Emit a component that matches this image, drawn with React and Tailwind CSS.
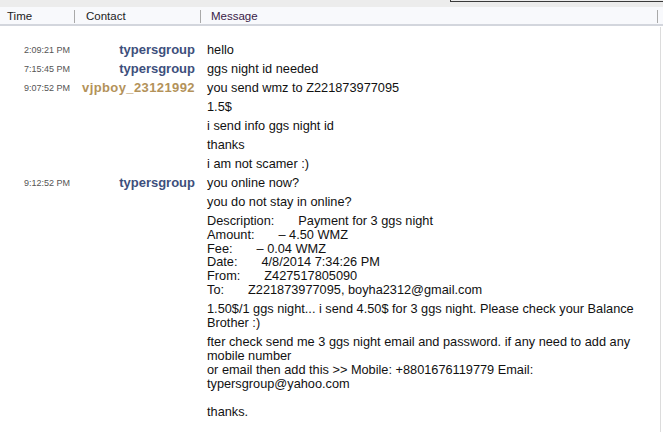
import React from 'react';

const font = { fontFamily: '"Liberation Sans", Arial, sans-serif' };

const rows = [
  { time: '2:09:21 PM', who: 'typersgroup', me: true, msgs: [['hello']] },
  { time: '7:15:45 PM', who: 'typersgroup', me: true, msgs: [['ggs night id needed']] },
  {
    time: '9:07:52 PM',
    who: 'vjpboy_23121992',
    me: false,
    msgs: [['you send wmz to Z221873977095'], ['1.5$'], ['i send info ggs night id'], ['thanks'], ['i am not scamer :)']],
  },
  {
    time: '9:12:52 PM',
    who: 'typersgroup',
    me: true,
    msgs: [
      ['you online now?'],
      ['you do not stay in online?'],
      'receipt',
      ['1.50$/1 ggs night... i send 4.50$ for 3 ggs night. Please check your Balance', 'Brother :)'],
      [
        'fter check send me 3 ggs night email and password. if any need to add any',
        'mobile number',
        'or email then add this >> Mobile: +8801676119779 Email:',
        'typersgroup@yahoo.com',
        '',
        'thanks.',
      ],
    ],
  },
];

const receipt = [
  ['Description:', 'Payment for 3 ggs night'],
  ['Amount:', '– 4.50 WMZ'],
  ['Fee:', '– 0.04 WMZ'],
  ['Date:', '4/8/2014 7:34:26 PM'],
  ['From:', 'Z427517805090'],
  ['To:', 'Z221873977095, boyha2312@gmail.com'],
];

const Message = ({ m }) => {
  if (m === 'receipt') {
    return (
      <div className="flex flex-col">
        {receipt.map(([k, v]) => (
          <div key={k} className="h-[13.8px] leading-[14px] whitespace-nowrap">
            <span>{k}</span>
            <span className="ml-[24px]">{v}</span>
          </div>
        ))}
      </div>
    );
  }
  return (
    <div className="flex flex-col">
      {m.map((line, i) => (
        <div key={i} className="h-[14px] leading-[14px] whitespace-nowrap">{line}</div>
      ))}
    </div>
  );
};

export default function App() {
  return (
    <div className="w-[663px] h-[432px] bg-white overflow-hidden" style={font}>
      {/* window strip */}
      <div className="flex h-[7px] bg-[#ececec]">
        <div className="flex-1" />
        <div className="w-[213px] h-[2px] border-l border-b border-[#3a3a3a]" />
      </div>

      {/* column header */}
      <div className="flex h-[19px] items-center pt-[2px] bg-[#f8f9fc] border-b-2 border-[#d3d6dd] text-[11.5px] text-[#222]">
        <div className="w-[74px] pl-[7px]">Time</div>
        <div className="w-px h-[13px] bg-[#a9a9a9]" />
        <div className="w-[125px] pl-[11px]">Contact</div>
        <div className="w-px h-[13px] bg-[#a9a9a9]" />
        <div className="flex-1 pl-[10px] text-[#3a2248]">Message</div>
        <div className="w-px h-[13px] bg-[#a9a9a9] mr-[5px]" />
      </div>

      <div className="flex">
        <div className="w-[660px] flex flex-col gap-[5px] pt-[17px]">
          {rows.map((r) => (
            <div key={r.time} className="flex">
              <div className="w-[70px] h-[14px] leading-[14px] text-right text-[9px] text-[#555]">{r.time}</div>
              <div
                className={`w-[125px] h-[14px] leading-[14px] text-right font-bold text-[13px] ${
                  r.me ? 'text-[#3d4f7c]' : 'text-[#b3925a] tracking-[0.4px]'
                }`}
              >
                {r.who}
              </div>
              <div className="flex-1 pl-[12px] flex flex-col gap-[5px] text-[12.75px] text-[#111]">
                {r.msgs.map((m, i) => (
                  <Message key={i} m={m} />
                ))}
              </div>
            </div>
          ))}
        </div>
        <div className="w-[3px] h-[420px] border-l border-[#dcdcdc] mt-[1px]" />
      </div>
    </div>
  );
}
